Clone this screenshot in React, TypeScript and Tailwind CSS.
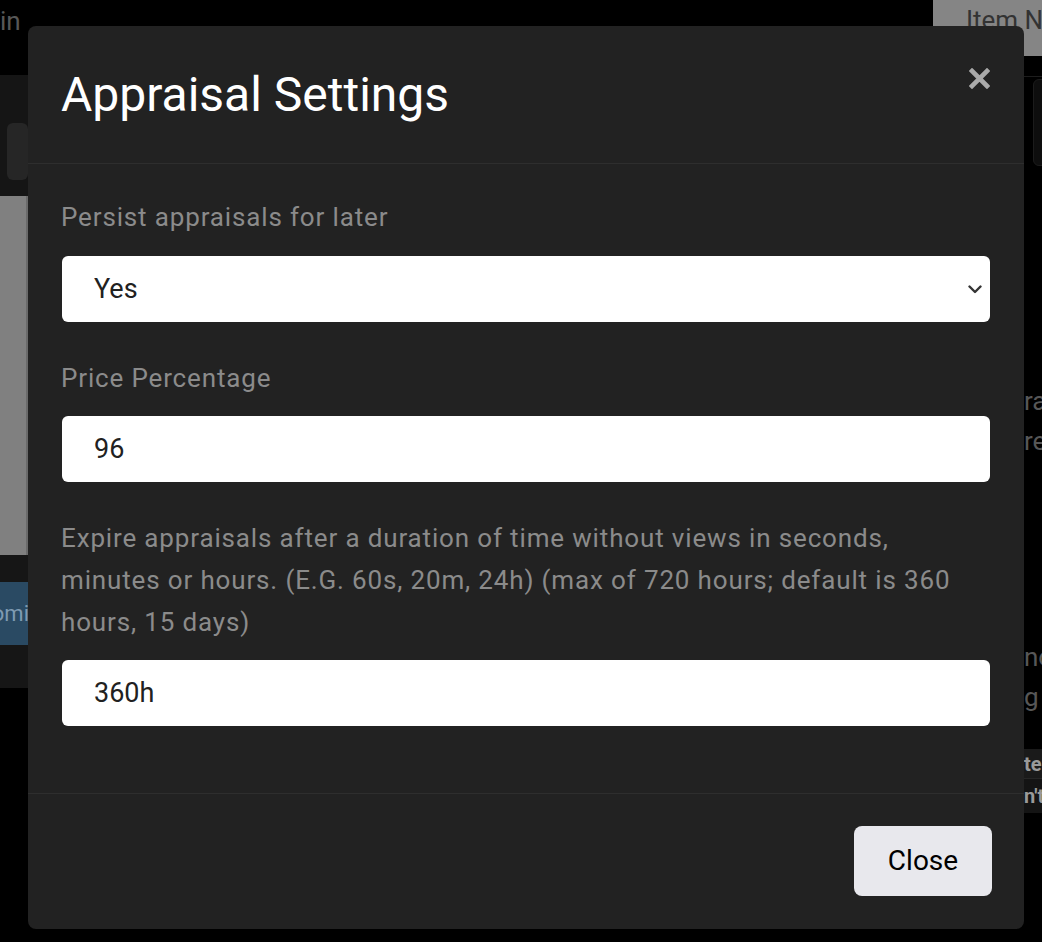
// App.tsx — Appraisal settings modal over a dimmed page

const labelClass = "block text-[26px] leading-[42px] tracking-[0.85px] text-[#8b8b8b]";
const fieldClass =
  "block w-full h-[66px] rounded-[6px] bg-white pl-[32px] pr-[48px] text-[27px] text-[#212121] outline-none border-0";

function CloseIcon() {
  return (
    <svg width="21" height="21" viewBox="0 0 21 21" aria-hidden="true">
      <path d="M3 3 L18 18 M18 3 L3 18" stroke="#a9a9a9" strokeWidth="4.6" strokeLinecap="square" />
    </svg>
  );
}

function Chevron() {
  return (
    <svg width="14" height="9" viewBox="0 0 14 9" aria-hidden="true">
      <path d="M1.5 1.5 L7 7 L12.5 1.5" fill="none" stroke="#343434" strokeWidth="2.4" strokeLinecap="round" strokeLinejoin="round" />
    </svg>
  );
}

function BackgroundPage() {
  return (
    <div className="flex flex-col h-full">
      {/* top bar */}
      <div className="flex justify-between h-[75px]">
        <span className="pt-[4px] text-[26px] text-[#575757] leading-[34px]">in</span>
        <div className="w-[109px] h-[56px] bg-[#858585] pl-[33px] pt-[3px] text-[26px] leading-[34px] text-[#333] overflow-hidden whitespace-nowrap">
          Item Name
        </div>
      </div>

      <div className="flex flex-1">
        {/* left column, mostly hidden */}
        <div className="w-[28px] flex flex-col">
          <div className="h-[121px] bg-[#151515] flex gap-[11px] pt-[48px] -ml-[20px]">
            <div className="w-[23px] h-[57px] rounded-[6px] bg-[#262626]" />
            <div className="w-[30px] h-[57px] rounded-[6px] bg-[#262626]" />
          </div>
          <div className="h-[359px] bg-[#808080] border-r-2 border-[#6a6a6a]" />
          <div className="h-[27px] bg-[#161616]" />
          <div className="h-[63px] bg-[#2a4a63] flex items-center justify-end text-[22px] text-[#7f9bb2] overflow-hidden whitespace-nowrap">
            <span className="-mr-[1px]">omi</span>
          </div>
          <div className="h-[43px] bg-[#161616]" />
        </div>

        <div className="flex-1" />

        {/* right column, mostly hidden */}
        <div className="w-[18px] flex flex-col overflow-hidden">
          <div className="mt-[1px] h-[1px] bg-[#1d1d1d]" />
          <div className="mt-[2px] ml-[9px] w-[30px] h-[87px] rounded-[6px] border border-[#1c1c1c] bg-[#0e0e0e]" />
          <div className="mt-[215px] text-[26px] leading-[40px] text-[#575757] whitespace-nowrap">
            <div>ra</div>
            <div>re</div>
          </div>
          <div className="mt-[176px] text-[26px] leading-[40px] text-[#575757] whitespace-nowrap">
            <div>no</div>
            <div>g</div>
          </div>
          <div className="mt-[32px] h-[30px] bg-[#1a1a1a] border-b border-[#262626] text-[20px] font-bold text-[#9a9a9a] leading-[30px] whitespace-nowrap">
            te
          </div>
          <div className="h-[34px] bg-[#141414] text-[20px] font-bold text-[#9a9a9a] leading-[34px] whitespace-nowrap">
            n't
          </div>
        </div>
      </div>
    </div>
  );
}

export default function App() {
  return (
    <div
      className="relative w-[1042px] h-[942px] overflow-hidden bg-black"
      style={{ fontFamily: "Roboto, 'Liberation Sans', sans-serif" }}
    >
      <BackgroundPage />

      {/* Modal */}
      <div className="absolute inset-0 pl-[28px] pt-[26px]">
        <div className="w-[996px] rounded-[8px] bg-[#222222]">
          {/* Header */}
          <div className="flex items-start justify-between px-[33px] pt-[40px] pb-[39px] border-b border-[#2e2e2e]">
            <h4 className="text-[48px] leading-[58px] text-white font-normal">Appraisal Settings</h4>
            <button className="mt-[2px] mr-[1px] p-0">
              <CloseIcon />
            </button>
          </div>

          {/* Body */}
          <div className="px-[34px] pt-[32px] pb-[32px]">
            <div className="mb-[35px]">
              <label className={`${labelClass} -ml-[1px]`}>Persist appraisals for later</label>
              <div className="relative mt-[18px]">
                <select className={`${fieldClass} appearance-none`} defaultValue="yes">
                  <option value="yes">Yes</option>
                  <option value="no">No</option>
                </select>
                <span className="absolute right-[8px] top-[29px] pointer-events-none">
                  <Chevron />
                </span>
              </div>
            </div>

            <div className="mb-[35px]">
              <label className={`${labelClass} -ml-[1px]`}>Price Percentage</label>
              <input className={`${fieldClass} mt-[17px]`} defaultValue="96" />
            </div>

            <div className="mb-[35px]">
              <label className={`${labelClass} -ml-[1px]`}>
                Expire appraisals after a duration of time without views in seconds, minutes or hours. (E.G.
                60s, 20m, 24h) (max of 720 hours; default is 360 hours, 15 days)
              </label>
              <input className={`${fieldClass} mt-[17px]`} defaultValue="360h" />
            </div>
          </div>

          {/* Footer */}
          <div className="flex justify-end border-t border-[#2e2e2e] px-[32px] pt-[32px] pb-[33px]">
            <button className="w-[138px] h-[70px] rounded-[8px] bg-[#e8e8ed] text-[28px] text-black">
              Close
            </button>
          </div>
        </div>
      </div>
    </div>
  );
}
